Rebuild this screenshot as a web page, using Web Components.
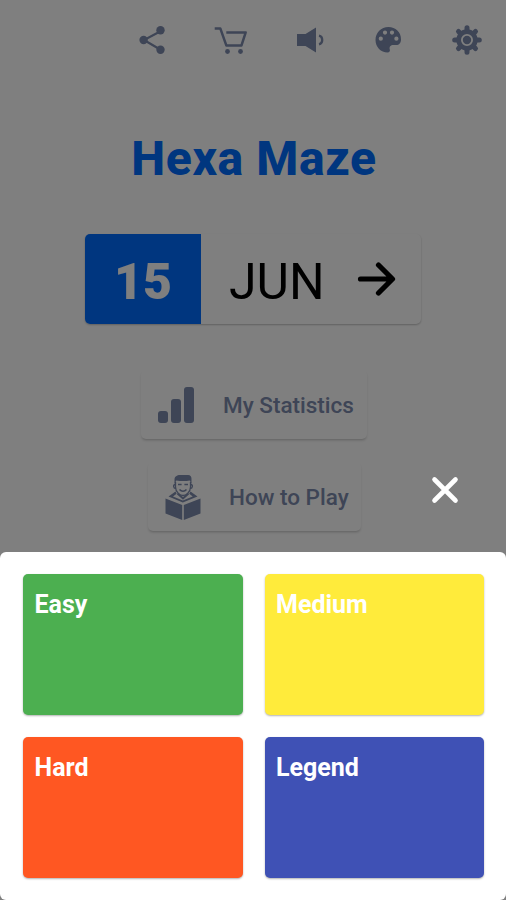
<!DOCTYPE html>
<html lang="en">
<head>
<meta charset="utf-8">
<title>Hexa Maze</title>
<style>
    :root {
        --primary-color: #006cff;
        --icon-color: #7c8aac;
    }
    body {
        margin: 0;
        font-family: Roboto, "Liberation Sans", sans-serif;
        overflow: hidden;
    }
</style>
</head>
<body>
<hexa-app></hexa-app>
<script>
const icons = {
    share: `<svg viewBox="0 0 32 32" width="32" height="32">
        <path d="M25 7 8 16l17 10" fill="none" stroke="currentColor" stroke-width="2.2"/>
        <circle cx="24.5" cy="6.2" r="4.2"/><circle cx="7.6" cy="16" r="4.2"/><circle cx="24.5" cy="25.7" r="4.2"/>
    </svg>`,
    cart: `<svg viewBox="0 0 36 32" width="36" height="32">
        <path d="M1.700 4.400H7.300l6 17H28.500l4.200-13H13.300" fill="none" stroke="currentColor" stroke-width="2.500" stroke-linejoin="round"/>
        <circle cx="14.500" cy="27.500" r="2.400"/><circle cx="27.500" cy="27.500" r="2.400"/>
    </svg>`,
    volume: `<svg viewBox="0 0 32 32" width="32" height="32">
        <path d="M4 10h8.500L23 3.500v25L12.500 22H4z"/>
        <path d="M26 11.700c4.300 1 4.300 7.600 0 8.600" fill="none" stroke="currentColor" stroke-width="2.300"/>
    </svg>`,
    palette: `<svg viewBox="0 0 32 32" width="32" height="32">
        <path fill-rule="evenodd" d="M16.500 3C9 3 3.500 8.800 3.500 16S9 28.500 15.500 28.500c2 0 2.800-1.200 2.300-2.900-.8-2.900.8-4.600 3.700-4.600H24c3.300 0 5-2.500 5-5.600C29 8 23.500 3 16.500 3zM8.800 12.600a2.100 2.100 0 1 1 0 4.200 2.100 2.100 0 0 1 0-4.200zM13 6.500a2.100 2.100 0 1 1 0 4.200 2.100 2.100 0 0 1 0-4.200zM20 6.500a2.100 2.100 0 1 1 0 4.200 2.100 2.100 0 0 1 0-4.200zM24.400 12.600a2.100 2.100 0 1 1 0 4.200 2.100 2.100 0 0 1 0-4.200z"/>
    </svg>`,
    gear: `<svg viewBox="0 0 32 32" width="32" height="32">
        <g stroke="currentColor" stroke-width="5" stroke-linecap="round">
            <path d="M16 3.700v24.600M3.700 16h24.600M7.500 7.500l17 17M24.500 7.500l-17 17"/>
        </g>
        <circle cx="16" cy="16" r="10.700"/>
        <circle cx="16" cy="16" r="5.100" fill="none" stroke="#fff" stroke-width="1.800"/>
    </svg>`,
    arrow: `<svg viewBox="0 0 40 38" width="40" height="38">
        <path d="M4.500 19h31M22.500 5l14 14-14 14" fill="none" stroke="currentColor" stroke-width="5.200" stroke-linecap="round" stroke-linejoin="round"/>
    </svg>`,
    stats: `<svg viewBox="0 0 36 36" width="36" height="36">
        <rect x="0" y="24" width="10" height="12" rx="3"/><rect x="13" y="12" width="10" height="24" rx="3"/><rect x="26" y="0" width="10" height="36" rx="3"/>
    </svg>`,
    reader: `<svg viewBox="0 0 36 46" width="36" height="46">
        <path d="M9.500 10V5.500C9.500 2.500 12 1 15 1h8c2.500 0 3.800 2 3.500 4.500V10l-1.700-3.500c-4 .8-9 .8-13.500 0z"/>
        <path d="M10.500 8v5c0 5 4.500 8.500 7.500 8.500s7.500-3.500 7.500-8.500V8M10 10.500c-2 0-2 4 .8 4M26 10.500c2 0 2 4-.8 4" fill="none" stroke="currentColor" stroke-width="1.300"/>
        <path d="M13 10.600h3.600M19.400 10.600H23M14.500 15.500c2 2.300 5 2.300 7 0" fill="none" stroke="currentColor" stroke-width="1.500"/>
        <path d="M10.500 17.500 3.500 22.500 17.800 28.500l14.700-6-7-5-1.300 2.200 3.500 2.800-9.900 4-9.800-4 3.600-2.800z"/>
        <path d="m12.500 19.500 5.500 5 5.500-5" fill="none" stroke="currentColor" stroke-width="2"/>
        <path d="M.5 24.500 17.200 31v15L.5 39.500zM35.500 24.500 18.800 31v15l16.700-6.500z"/>
    </svg>`,
    close: `<svg viewBox="0 0 28 28" width="28" height="28">
        <path d="m3.500 3.500 21 21m0-21-21 21" fill="none" stroke="currentColor" stroke-width="4.600" stroke-linecap="round"/>
    </svg>`
};

class AppIcon extends HTMLElement {
    constructor() {
        super();
        this.attachShadow({ mode: 'open' });
    }

    connectedCallback() {
        this.shadowRoot.innerHTML = `
            <style>
                :host { display: block; flex: none; }
                svg { display: block; fill: currentColor; }
            </style>
            ${icons[this.getAttribute('name')]}
        `;
    }
}

class TopBar extends HTMLElement {
    constructor() {
        super();
        this.attachShadow({ mode: 'open' });
        this.shadowRoot.innerHTML = `
            <style>
                :host {
                    display: grid;
                    grid-template-columns: repeat(5, 78.7px);
                    justify-content: end;
                    justify-items: center;
                    align-items: center;
                    height: 80px;
                    color: var(--icon-color);
                }
            </style>
            <slot></slot>
        `;
    }
}

class DateCard extends HTMLElement {
    constructor() {
        super();
        this.attachShadow({ mode: 'open' });
        this.shadowRoot.innerHTML = `
            <style>
                :host {
                    display: flex;
                    width: 336px;
                    height: 90px;
                    border-radius: 5px;
                    overflow: hidden;
                    box-shadow: 0 1px 2px rgba(0,0,0,0.25);
                    font-size: 50px;
                    line-height: 90px;
                }
                .day {
                    width: 116px;
                    background-color: var(--primary-color);
                    color: white;
                    text-align: center;
                    font-weight: 900;
                    padding-top: 3px;
                    box-sizing: border-box;
                }
                .month {
                    flex-grow: 1;
                    display: flex;
                    align-items: center;
                    justify-content: space-between;
                    padding: 0 25px 0 28px;
                    color: black;
                }
                .label {
                    padding-top: 6px;
                }
            </style>
            <div class="day"><slot name="day"></slot></div>
            <div class="month">
                <div class="label"><slot name="month"></slot></div>
                <app-icon name="arrow"></app-icon>
            </div>
        `;
    }
}

class MenuButton extends HTMLElement {
    constructor() {
        super();
        this.attachShadow({ mode: 'open' });
        this.shadowRoot.innerHTML = `
            <style>
                :host {
                    display: flex;
                    align-items: center;
                    box-sizing: border-box;
                    height: 69px;
                    border-radius: 5px;
                    box-shadow: 0 2px 3px -1px rgba(0,0,0,0.25);
                    color: var(--icon-color);
                    font-size: 22.5px;
                    font-weight: 500;
                    gap: 28px;
                    white-space: nowrap;
                }
                span {
                    padding-top: 1px;
                }
            </style>
            <slot name="icon"></slot>
            <span><slot></slot></span>
        `;
    }
}

class LevelCard extends HTMLElement {
    constructor() {
        super();
        this.attachShadow({ mode: 'open' });
        this.shadowRoot.innerHTML = `
            <style>
                :host {
                    display: block;
                    box-sizing: border-box;
                    padding: 17px 11.5px;
                    border-radius: 5px;
                    box-shadow: 0 1px 2px rgba(0,0,0,0.3);
                    color: white;
                    font-size: 25px;
                    font-weight: 700;
                    line-height: 28px;
                }
            </style>
            <slot></slot>
        `;
    }
}

class LevelSheet extends HTMLElement {
    constructor() {
        super();
        this.attachShadow({ mode: 'open' });
        this.shadowRoot.innerHTML = `
            <style>
                :host {
                    display: grid;
                    grid-template: repeat(2, 141px) / 1fr 1fr;
                    gap: 22px;
                    box-sizing: border-box;
                    height: 348px;
                    padding: 22px 22px 22px 23px;
                    border-radius: 6px;
                    background-color: white;
                }
            </style>
            <slot></slot>
        `;
    }
}

class HexaApp extends HTMLElement {
    constructor() {
        super();
        this.attachShadow({ mode: 'open' });
        this.shadowRoot.innerHTML = `
            <style>
                :host {
                    display: block;
                    position: relative;
                    width: 506px;
                    height: 900px;
                    overflow: hidden;
                    background-color: white;
                }
                .home {
                    display: flex;
                    flex-direction: column;
                    align-items: center;
                }
                top-bar {
                    align-self: stretch;
                }
                h1 {
                    margin: 51px 0 0 2px;
                    font-size: 48px;
                    font-weight: 800;
                    line-height: 56px;
                    letter-spacing: 0.6px;
                    color: var(--primary-color);
                }
                date-card {
                    margin-top: 47px;
                }
                .stats {
                    width: 226px;
                    margin: 46px 0 0 2px;
                    padding-left: 17px;
                    gap: 29px;
                }
                .help {
                    width: 213px;
                    margin: 23px 0 0 3px;
                    padding-left: 17px;
                }
                .overlay {
                    position: absolute;
                    inset: 0;
                    display: flex;
                    flex-direction: column;
                    justify-content: flex-end;
                    background-color: rgba(0,0,0,0.5);
                }
                .close {
                    align-self: flex-end;
                    margin: 0 47px 48px 0;
                    color: white;
                }
                .easy { background-color: #4caf50; }
                .medium { background-color: #ffeb3b; }
                .hard { background-color: #ff5722; }
                .legend { background-color: #3f51b5; }
            </style>
            <div class="home">
                <top-bar>
                    <app-icon name="share"></app-icon>
                    <app-icon name="cart"></app-icon>
                    <app-icon name="volume"></app-icon>
                    <app-icon name="palette"></app-icon>
                    <app-icon name="gear"></app-icon>
                </top-bar>
                <h1>Hexa Maze</h1>
                <date-card>
                    <span slot="day">15</span>
                    <span slot="month">JUN</span>
                </date-card>
                <menu-button class="stats"><app-icon slot="icon" name="stats"></app-icon>My Statistics</menu-button>
                <menu-button class="help"><app-icon slot="icon" name="reader"></app-icon>How to Play</menu-button>
            </div>
            <div class="overlay">
                <app-icon class="close" name="close"></app-icon>
                <level-sheet>
                    <level-card class="easy">Easy</level-card>
                    <level-card class="medium">Medium</level-card>
                    <level-card class="hard">Hard</level-card>
                    <level-card class="legend">Legend</level-card>
                </level-sheet>
            </div>
        `;
    }
}

customElements.define('app-icon', AppIcon);
customElements.define('top-bar', TopBar);
customElements.define('date-card', DateCard);
customElements.define('menu-button', MenuButton);
customElements.define('level-card', LevelCard);
customElements.define('level-sheet', LevelSheet);
customElements.define('hexa-app', HexaApp);
</script>
</body>
</html>
